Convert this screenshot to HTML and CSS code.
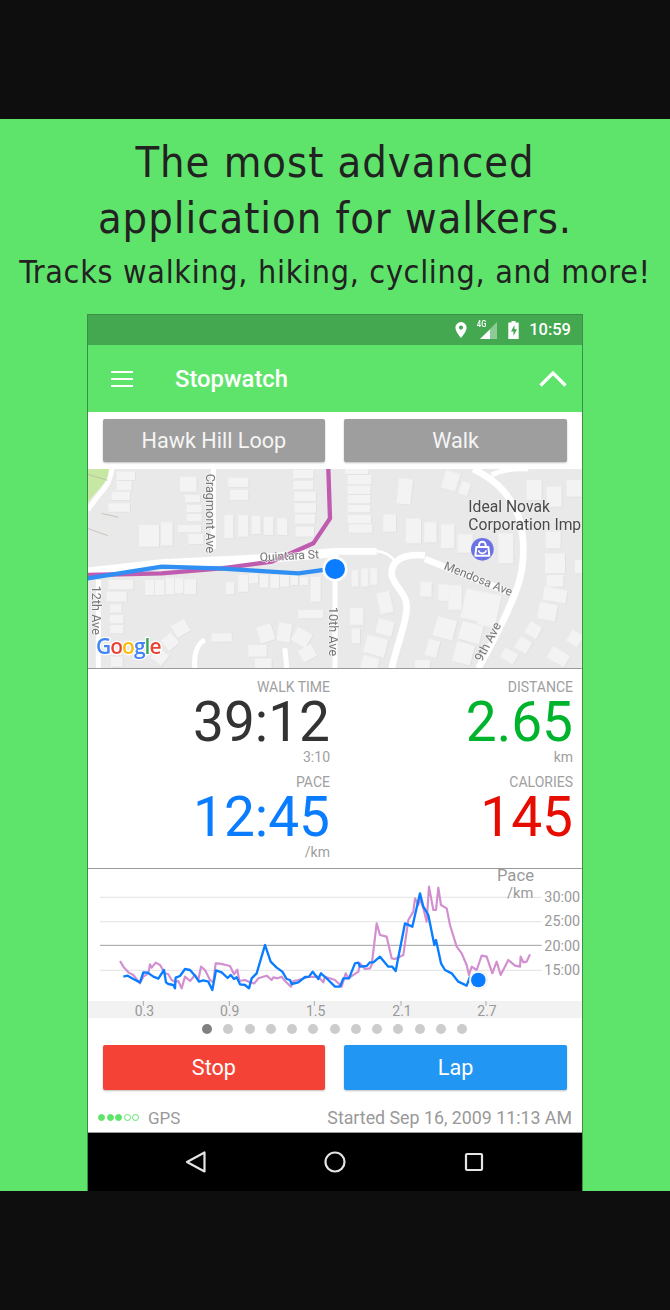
FILE: index.html
```html
<!DOCTYPE html>
<html lang="en">
<head>
<meta charset="utf-8">
<title>Stopwatch</title>
<link rel="stylesheet" href="styles.css">
</head>
<body>
<div class="band-top"></div>
<main class="promo">
  <h1 class="headline">The most advanced<br>application for walkers.</h1>
  <p class="subline">Tracks walking, hiking, cycling, and more!</p>
  <section class="phone">
    <div class="statusbar">
      <svg class="st-pin" width="12" height="16" viewBox="0 0 12 16"><path class="w" fill-rule="evenodd" d="M6 0a5.6 5.6 0 0 0-5.6 5.6C.4 9.8 6 16 6 16s5.600-6.200 5.600-10.400A5.600 5.600 0 0 0 6 0zm0 3.500a2.100 2.100 0 1 1 0 4.200 2.100 2.100 0 0 1 0-4.200z"/></svg>
      <span class="st-net"><span class="st-4g">4G</span>
        <svg class="st-sig" width="18" height="17" viewBox="0 0 18 17"><path class="w-dim" d="M17 0v17H0z"/><path class="w" d="M10 7.500V17H0z"/></svg>
      </span>
      <svg class="st-bat" width="11" height="18" viewBox="0 0 11 18"><path class="w" fill-rule="evenodd" d="M3.500 0h4v1.500h3.200V18H.3V1.500h3.200zM6.500 4 3 10.500h2.500V15L9 8.300H6.500z"/></svg>
      <span class="st-time">10:59</span>
    </div>
    <header class="appbar">
      <svg class="menu" width="22" height="16" viewBox="0 0 22 16"><path class="line-w" d="M0 1h22M0 8h22M0 15h22"/></svg>
      <span class="apptitle">Stopwatch</span>
      <svg class="chev" width="28" height="16" viewBox="0 0 28 16"><path class="chev-p" d="M1.500 14.500 14 2l12.500 12.500"/></svg>
    </header>
    <div class="btnrow top">
      <button class="btn grey">Hawk Hill Loop</button>
      <button class="btn grey">Walk</button>
    </div>
    <div class="map">
      <svg width="494" height="199" viewBox="0 0 494 199">
        <rect class="m-bg" width="494" height="199"/>
        <g transform="translate(-3 -4) scale(.33333)">
          <path class="m-park" d="M8 12h67l-6 28-30 36-31 36z"/>
          <path class="m-road" d="M80 12c-2 30-20 60-42 82L8 135"/>
          <path class="m-thin" d="M8 28l60 18M50 145l50 12M8 190l60 22"/>
          <g class="m-b">
            <rect x="162" y="180" width="60" height="65"/><rect x="228" y="172" width="35" height="70"/><rect x="278" y="180" width="70" height="22"/><rect x="310" y="207" width="45" height="30"/><rect x="285" y="35" width="50" height="45"/><rect x="300" y="90" width="45" height="22"/><rect x="305" y="120" width="45" height="22"/><rect x="305" y="147" width="45" height="22"/><rect x="95" y="20" width="55" height="25"/><rect x="95" y="48" width="45" height="28"/><rect x="80" y="80" width="55" height="25"/><rect x="70" y="115" width="65" height="25"/><rect x="430" y="38" width="60" height="28"/><rect x="435" y="75" width="55" height="30"/><rect x="418" y="150" width="27" height="70"/><rect x="460" y="150" width="30" height="65"/><rect x="500" y="152" width="27" height="55"/><rect x="537" y="155" width="28" height="55"/><rect x="577" y="160" width="30" height="50"/><rect x="625" y="15" width="60" height="25"/><rect x="625" y="48" width="60" height="25"/><rect x="628" y="80" width="65" height="28"/><rect x="628" y="115" width="65" height="28"/><rect x="630" y="148" width="60" height="28"/><rect x="632" y="185" width="55" height="30"/><rect x="70" y="345" width="75" height="28"/><rect x="65" y="380" width="60" height="30"/><rect x="75" y="418" width="35" height="25"/><rect x="75" y="450" width="40" height="25"/><rect x="75" y="480" width="40" height="25"/><rect x="180" y="345" width="28" height="45"/><rect x="210" y="345" width="28" height="45"/><rect x="242" y="338" width="26" height="50"/><rect x="270" y="340" width="25" height="45"/><rect x="298" y="343" width="35" height="45"/><rect x="423" y="352" width="25" height="35"/><rect x="460" y="330" width="30" height="50"/><rect x="492" y="325" width="27" height="30"/><rect x="525" y="328" width="25" height="40"/><rect x="557" y="330" width="25" height="40"/><rect x="585" y="330" width="27" height="35"/><rect x="617" y="330" width="22" height="30"/><rect x="645" y="335" width="25" height="25"/><rect x="677" y="335" width="30" height="75"/><rect x="640" y="435" width="75" height="25"/><rect x="380" y="505" width="60" height="25"/>
            <rect x="490" y="540" width="55" height="35"/><rect x="510" y="580" width="50" height="30"/>
            <rect x="520" y="480" width="45" height="50" transform="rotate(-18 542 505)"/><rect x="578" y="475" width="40" height="55" transform="rotate(8 598 502)"/><rect x="625" y="495" width="50" height="45" transform="rotate(30 650 517)"/><rect x="645" y="545" width="45" height="40" transform="rotate(-30 667 565)"/>
            <rect x="265" y="470" width="45" height="40" transform="rotate(-30 287 490)"/><rect x="235" y="510" width="40" height="40" transform="rotate(-40 255 530)"/><rect x="205" y="555" width="40" height="40" transform="rotate(-50 225 575)"/>
            <rect x="72" y="545" width="40" height="25"/><rect x="78" y="575" width="35" height="30"/>
          </g>
          <path class="m-road" d="M385 12v240M40 345v265M600 550c0 20 5 40 5 60M360 525c-25 10-35 50-30 85" />
          <path class="m-main" d="M8 322 230 297 520 282 760 262"/>
        </g>
        <g transform="translate(247 -4) scale(.33333)">
          <g class="m-b">
            <rect x="38" y="30" width="72" height="28"/><rect x="38" y="62" width="68" height="25"/><rect x="38" y="90" width="68" height="25"/><rect x="38" y="120" width="68" height="22"/><rect x="38" y="150" width="70" height="25"/><rect x="42" y="178" width="70" height="25"/><rect x="145" y="148" width="38" height="52"/><rect x="188" y="42" width="42" height="75" transform="rotate(6 209 80)"/><rect x="213" y="160" width="45" height="75"/><rect x="268" y="172" width="37" height="60"/><rect x="318" y="178" width="40" height="72"/><rect x="368" y="208" width="45" height="55"/><rect x="490" y="205" width="45" height="90"/><rect x="575" y="45" width="45" height="60"/><rect x="635" y="65" width="45" height="60"/><rect x="695" y="45" width="45" height="50"/><rect x="632" y="200" width="45" height="50"/><rect x="630" y="265" width="60" height="60"/><rect x="720" y="285" width="25" height="40"/><rect x="635" y="330" width="50" height="35"/><rect x="625" y="370" width="70" height="40" transform="rotate(10 660 390)"/><rect x="610" y="415" width="55" height="50" transform="rotate(10 637 440)"/><rect x="50" y="315" width="20" height="50"/><rect x="78" y="310" width="22" height="55"/><rect x="105" y="310" width="22" height="50"/><rect x="255" y="350" width="35" height="45"/><rect x="310" y="358" width="30" height="50"/><rect x="340" y="360" width="40" height="75"/><rect x="385" y="375" width="55" height="90" transform="rotate(12 412 420)"/><rect x="435" y="385" width="55" height="100" transform="rotate(12 462 435)"/><rect x="45" y="430" width="40" height="50"/><rect x="50" y="490" width="25" height="45"/><rect x="130" y="380" width="40" height="65" transform="rotate(-12 150 412)"/><rect x="300" y="460" width="60" height="60" transform="rotate(15 330 490)"/><rect x="375" y="475" width="65" height="55" transform="rotate(15 407 502)"/><rect x="125" y="465" width="50" height="45" transform="rotate(15 150 487)"/><rect x="90" y="515" width="65" height="55" transform="rotate(15 122 542)"/><rect x="80" y="575" width="50" height="40" transform="rotate(15 105 595)"/><rect x="358" y="535" width="55" height="60" transform="rotate(15 385 565)"/><rect x="275" y="525" width="35" height="50" transform="rotate(15 292 550)"/><rect x="240" y="585" width="45" height="30"/><rect x="500" y="555" width="45" height="35" transform="rotate(30 522 572)"/><rect x="545" y="520" width="40" height="40" transform="rotate(30 565 540)"/><rect x="575" y="475" width="40" height="40" transform="rotate(30 595 495)"/><rect x="640" y="555" width="60" height="40" transform="rotate(30 670 575)"/><rect x="700" y="500" width="40" height="40" transform="rotate(30 720 520)"/><rect x="30" y="12" width="70" height="15"/><rect x="325" y="20" width="45" height="55" transform="rotate(18 347 47)"/><rect x="375" y="50" width="28" height="40" transform="rotate(18 389 70)"/>
          </g>
          <path class="m-side" d="M-10 259H125"/>
          <path class="m-thin2" d="M125 258c25 2 40 12 55 30"/>
          <path class="m-road2" d="M270 272c-60-8-102 12-100 55 2 35 48 55 45 105-3 50-35 125-45 180"/>
          <path class="m-road3" d="M270 288c-40-6-72 12-72 45 0 32 45 50 42 100-3 55-35 125-42 180"/>
          <path class="m-road2" d="M270 282 530 385"/>
          <path class="m-road2" d="M415 12C470 40 510 70 540 130c30 55 30 150 15 210-15 60-70 170-125 270"/>
          <path class="m-road" d="M470 30c30-15 70-20 110-18M0 300V610"/>
        </g>
        <g transform="translate(-3 -4) scale(.33333)">
          <path class="r-purple" d="M730 12 735 160 685 235 560 290 410 310 230 325 8 330"/>
          <path class="r-blue" d="M8 340 230 305 400 310 640 325 750 310"/>
          <text class="m-t" font-size="38" transform="translate(362 26) rotate(90)">Cragmont Ave</text>
          <text class="m-t" font-size="38" transform="translate(20 362) rotate(90)">12th Ave</text>
          <text class="m-t" font-size="36" transform="translate(525 289) rotate(-3)">Quintara St</text>
        </g>
        <g transform="translate(247 -4) scale(.33333)">
          <text class="m-t" font-size="38" transform="translate(-17 426) rotate(90)">10th Ave</text>
          <text class="m-t" font-size="36" transform="translate(325 312) rotate(22)">Mendosa Ave</text>
          <text class="m-t" font-size="38" transform="translate(440 592) rotate(-62)">9th Ave</text>
          <text class="m-poi" font-size="47" x="400" y="141">Ideal Novak</text>
          <text class="m-poi" font-size="47" x="400" y="196">Corporation Impo</text>
          <circle class="poi" cx="442" cy="253" r="34"/>
          <path class="poi-bag" d="M424 246h36l3 26h-42zM432 246v-6a10 10 0 0 1 20 0v6"/>
          <path class="poi-smile" d="M431 256a11 9 0 0 0 22 0"/>
        </g>
        <circle class="mark-ring" cx="247" cy="100" r="12.500"/>
        <circle class="mark" cx="247" cy="100" r="10"/>
        <text class="g-logo" x="8" y="185"><tspan class="g1">G</tspan><tspan class="g2">o</tspan><tspan class="g3">o</tspan><tspan class="g1">g</tspan><tspan class="g4">l</tspan><tspan class="g2">e</tspan></text>
      </svg>
    </div>
    <div class="stats">
      <div class="stat"><span class="lab">WALK TIME</span><span class="val dark">39:12</span><span class="sub">3:10</span></div>
      <div class="stat"><span class="lab">DISTANCE</span><span class="val green">2.65</span><span class="sub">km</span></div>
      <div class="stat"><span class="lab">PACE</span><span class="val blue">12:45</span><span class="sub">/km</span></div>
      <div class="stat"><span class="lab">CALORIES</span><span class="val red">145</span><span class="sub">&nbsp;</span></div>
    </div>
    <div class="chart">
      <svg width="494" height="149" viewBox="0 0 494 149">
        <rect class="c-band" y="132" width="494" height="17"/>
        <g transform="translate(-3 -4) scale(.33333)">
          <path class="c-grid" d="M45 97H1370M45 170H1370M45 316H1370"/>
          <path class="c-grid-d" d="M45 241H1370"/>
          <path class="c-tick" d="M175 408v14M433 408v14M688 408v14M948 408v14M1203 408v14"/>
          <path class="c-pur" d="M105 288 115 305 130 322 145 330 165 355 175 335 190 325 195 298 200 308 212 293 225 300 240 325 250 328 260 345 270 350 280 348 290 370 300 335 315 348 330 330 340 345 348 305 360 315 375 345 385 352 392 295 405 296 435 303 447 328 457 314 463 348 480 345 495 352 508 355 520 340 545 332 560 345 565 337 578 340 590 335 600 348 618 365 625 348 640 345 670 336 700 335 715 352 720 335 750 345 760 355 770 365 782 325 790 340 820 320 825 295 840 312 855 310 860 300 875 175 885 210 905 215 920 280 930 282 955 270 970 165 985 140 990 100 1000 120 1005 100 1015 130 1025 170 1032 65 1045 135 1053 135 1060 68 1068 120 1085 130 1095 180 1115 245 1130 265 1145 300 1152 330 1160 305 1175 315 1190 272 1205 275 1222 325 1235 290 1247 330 1270 285 1290 302 1305 305 1307 275 1315 292 1325 290 1335 268"/>
          <path class="c-blu" d="M115 335 128 332 145 342 165 352 175 322 188 323 205 335 220 341 237 315 243 352 250 357 265 360 270 370 272 338 285 333 300 312 315 315 330 332 342 350 355 346 370 350 382 375 393 316 410 322 428 339 437 330 447 342 455 337 465 358 480 360 492 370 500 340 515 325 540 240 557 290 575 308 592 320 605 342 615 345 620 357 640 352 660 336 672 335 683 320 700 342 708 325 730 345 750 365 765 365 775 340 792 340 810 295 820 293 825 305 845 303 855 292 865 292 885 275 910 305 922 305 932 318 960 175 982 185 1005 85 1015 125 1030 150 1048 240 1053 225 1068 295 1080 315 1100 325 1120 350 1145 362 1155 335"/>
          <circle class="c-ring" cx="1180" cy="345" r="27"/>
          <circle class="c-dot" cx="1180" cy="345" r="22"/>
          <text class="c-y" font-size="43" x="1378" y="110">30:00</text>
          <text class="c-y" font-size="43" x="1378" y="184">25:00</text>
          <text class="c-y" font-size="43" x="1378" y="257">20:00</text>
          <text class="c-y" font-size="43" x="1378" y="330">15:00</text>
          <text class="c-p" font-size="50" x="1347" y="47">Pace</text>
          <text class="c-p" font-size="44" x="1345" y="98">/km</text>
          <text class="c-x" font-size="42" x="178" y="452">0.3</text>
          <text class="c-x" font-size="42" x="434" y="452">0.9</text>
          <text class="c-x" font-size="42" x="692" y="452">1.5</text>
          <text class="c-x" font-size="42" x="951" y="452">2.1</text>
          <text class="c-x" font-size="42" x="1206" y="452">2.7</text>
        </g>
      </svg>
    </div>
    <div class="dots">
      <i class="dot on"></i><i class="dot"></i><i class="dot"></i><i class="dot"></i><i class="dot"></i><i class="dot"></i><i class="dot"></i><i class="dot"></i><i class="dot"></i><i class="dot"></i><i class="dot"></i><i class="dot"></i><i class="dot"></i>
    </div>
    <div class="btnrow action">
      <button class="btn red-b">Stop</button>
      <button class="btn blue-b">Lap</button>
    </div>
    <footer class="foot">
      <span class="gps"><i class="g on"></i><i class="g on"></i><i class="g on"></i><i class="g"></i><i class="g"></i></span>
      <span class="gps-l">GPS</span>
      <span class="started">Started Sep 16, 2009 11:13 AM</span>
    </footer>
    <nav class="navbar">
      <svg width="22" height="24" viewBox="0 0 22 24"><path class="nav-i" d="M19.500 2.500v19L2 12z"/></svg>
      <svg width="22" height="22" viewBox="0 0 22 22"><circle class="nav-i" cx="11" cy="11" r="9.500"/></svg>
      <svg width="20" height="20" viewBox="0 0 20 20"><rect class="nav-i" x="2" y="2" width="16" height="16" rx="1"/></svg>
    </nav>
  </section>
</main>
<div class="band-bottom"></div>
</body>
</html>
```
FILE: styles.css
```css
* { box-sizing: border-box; }
html, body { margin: 0; padding: 0; background: #0e0e0e; }
body { width: 670px; height: 1310px; overflow: hidden; font-family: Roboto, sans-serif; }
.band-top { height: 119px; }
.band-bottom { height: 119px; }
.promo { height: 1072px; background: #5ee46a; display: flex; flex-direction: column; align-items: center; color: #222; overflow: hidden; }
.headline { margin: 15px 0 0; font: 400 43px/56px "DejaVu Sans", sans-serif; font-stretch: condensed; letter-spacing: 1px; text-align: center; white-space: nowrap; }
.subline { margin: 5px 0 0; font: 400 32px/42px "DejaVu Sans", sans-serif; font-stretch: condensed; letter-spacing: .7px; white-space: nowrap; }
.phone { margin-top: 21px; width: 496px; height: 877px; flex: none; border: 1px solid #3c8f47; border-bottom: 0; background: #fff; display: flex; flex-direction: column; overflow: hidden; }

.statusbar { height: 30px; background: #43a84f; display: flex; align-items: center; justify-content: flex-end; padding-right: 11px; flex: none; }
.st-pin { margin-right: 13px; }
.st-net { position: relative; width: 18px; height: 17px; margin-right: 10px; margin-top: 1px; }
.st-4g { position: absolute; left: -4px; top: -3px; font: 500 9px/10px Roboto, sans-serif; color: #fff; transform: scaleX(.85); }
.st-sig { position: absolute; left: 0; top: 0; }
.st-bat { margin-right: 10px; }
.st-time { color: #fff; font: 500 16.500px/20px Roboto, sans-serif; }
.w { fill: #fff; }
.w-dim { fill: #8fcb96; }

.appbar { height: 67px; background: #5ee46a; display: flex; align-items: center; padding: 0 15px 0 23px; flex: none; }
.menu { flex: none; }
.line-w { stroke: #fff; stroke-width: 2; fill: none; }
.apptitle { margin-left: 42px; color: #fff; font: 500 23.800px/28px Roboto, sans-serif; flex: 1; }
.chev-p { stroke: #fff; stroke-width: 3.200; fill: none; }

.btnrow { display: flex; gap: 19px; padding: 0 15px 0 14.500px; flex: none; }
.btnrow.top { height: 57px; padding-top: 7px; }
.btnrow.action { height: 55px; padding-top: 5px; }
.btn { flex: 1; border: 0; border-radius: 2px; padding: 1px 0 0; color: #fff; font: 400 21.600px/26px Roboto, sans-serif; box-shadow: 0 1px 2px rgba(0,0,0,.25); }
.top .btn { height: 43px; }
.action .btn { height: 45px; }
.grey { background: #9e9e9e; color: #f5f5f5; }
.red-b { background: #f44336; }
.blue-b { background: #2196f3; }

.map { height: 200px; border-bottom: 1px solid #9a9a9a; overflow: hidden; flex: none; }
.map svg, .chart svg { display: block; }
.m-bg { fill: #e9e9e9; }
.m-b { filter: drop-shadow(3px 2px 0 #e0e0e0); }
.m-b rect { fill: #f3f3f3; }
.m-park { fill: #c6e8a2; }
.m-road { stroke: #fff; stroke-width: 15; fill: none; }
.m-main { stroke: #fff; stroke-width: 28; fill: none; }
.m-side { stroke: #fff; stroke-width: 20; fill: none; }
.m-road2 { stroke: #fff; stroke-width: 20; fill: none; }
.m-road3 { stroke: #e9e9e9; stroke-width: 12; fill: none; }
.m-thin { stroke: #b8b0a0; stroke-width: 2; fill: none; }
.m-thin2 { stroke: #fff; stroke-width: 7; fill: none; }
.r-purple { stroke: #c05cb0; stroke-width: 13; fill: none; }
.r-blue { stroke: #2f8ff2; stroke-width: 13; fill: none; }
.m-t { fill: #777; font-family: Roboto, sans-serif; stroke: #f4f4f4; stroke-width: 4; paint-order: stroke; }
.m-poi { fill: #4a4a4a; font-family: Roboto, sans-serif; stroke: #eee; stroke-width: 4; paint-order: stroke; }
.poi { fill: #6b72e4; }
.poi-bag { fill: none; stroke: #fff; stroke-width: 6; stroke-linejoin: round; }
.poi-smile { fill: none; stroke: #fff; stroke-width: 5; }
.mark-ring { fill: #fff; }
.mark { fill: #0a7cff; }
.g-logo { font: 600 21px "Open Sans", sans-serif; letter-spacing: -1px; stroke: #fff; stroke-width: 2.500; paint-order: stroke; }
.g1 { fill: #4285f4; }
.g2 { fill: #ea4335; }
.g3 { fill: #fbbc05; }
.g4 { fill: #34a853; }

.stats { height: 200px; display: grid; grid-template-columns: 242px 243px; grid-template-rows: 95px 95px; padding: 10px 9px 0 0; border-bottom: 1px solid #9a9a9a; flex: none; }
.stat { display: flex; flex-direction: column; align-items: flex-end; }
.lab, .sub { color: #a0a0a0; font: 400 14px/16px Roboto, sans-serif; }
.val { font: 400 55px/54px Roboto, sans-serif; letter-spacing: 0; }
.dark { color: #333; }
.green { color: #00b32c; }
.blue { color: #0a7cff; }
.red { color: #e60d00; }

.chart { height: 149px; flex: none; overflow: hidden; }
.c-band { fill: #f2f2f2; }
.c-grid { stroke: #e8e8e8; stroke-width: 4; fill: none; }
.c-grid-d { stroke: #a0a0a0; stroke-width: 3; fill: none; }
.c-tick { stroke: #aaa; stroke-width: 3; fill: none; }
.c-pur { stroke: #d28fd0; stroke-width: 6.500; fill: none; stroke-linejoin: round; }
.c-blu { stroke: #0a7cff; stroke-width: 7; fill: none; stroke-linejoin: round; }
.c-ring { fill: #fff; stroke: #e4e4e4; stroke-width: 2; }
.c-dot { fill: #0a7cff; }
.c-y { fill: #999; font-family: Roboto, sans-serif; }
.c-p { fill: #999; font-family: Roboto, sans-serif; text-anchor: end; }
.c-x { fill: #999; font-family: Roboto, sans-serif; text-anchor: middle; }

.dots { height: 22px; display: flex; align-items: center; gap: 11.250px; padding-left: 114px; flex: none; }
.dot { width: 10px; height: 10px; border-radius: 50%; background: #ccc; flex: none; }
.dot.on { background: #808080; }

.foot { height: 38px; display: flex; align-items: center; padding: 8px 10px 0; color: #999; font: 400 17.800px/20px Roboto, sans-serif; flex: none; border-bottom: 1px solid #9a9a9a; }
.gps { display: flex; gap: 1.500px; width: 50px; flex: none; }
.g { width: 7px; height: 7px; border-radius: 50%; border: 1px solid #5ee46a; flex: none; }
.g.on { background: #5ee46a; }
.gps-l { flex: 1; font-size: 17px; }

.navbar { flex: 1; background: #000; display: flex; align-items: center; padding-bottom: 1px; }
.navbar svg { flex: none; }
.navbar svg:nth-child(1) { margin-left: 97px; }
.navbar svg:nth-child(2) { margin-left: 117px; }
.navbar svg:nth-child(3) { margin-left: 118px; }
.nav-i { fill: none; stroke: #e4e4e4; stroke-width: 2.200; stroke-linejoin: round; }
```
